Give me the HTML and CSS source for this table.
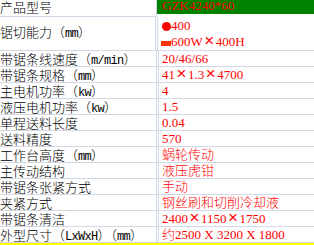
FILE: index.html
```html
<!DOCTYPE html>
<html lang="zh-CN">
<head>
<meta charset="utf-8">
<title>产品参数</title>
<link rel="stylesheet" href="styles.css">
</head>
<body>
<div class="sheet">
  <div class="row head">
    <div class="lbl">产品型号</div>
    <div class="val model">GZK4240*60</div>
  </div>
  <div class="row tall">
    <div class="lbl">锯切能力（<span class="asc">mm</span>）</div>
    <div class="val">
      <div class="ln"><span class="dot"></span>400</div>
      <div class="ln"><span class="bar"></span>600W<span class="x">×</span>400H</div>
    </div>
  </div>
  <div class="row">
    <div class="lbl">带锯条线速度（<span class="asc">m/min</span>）</div>
    <div class="val">20/46/66</div>
  </div>
  <div class="row">
    <div class="lbl">带锯条规格（<span class="asc">mm</span>）</div>
    <div class="val">41<span class="x">×</span>1.3<span class="x">×</span>4700</div>
  </div>
  <div class="row">
    <div class="lbl">主电机功率（<span class="asc">kw</span>）</div>
    <div class="val">4</div>
  </div>
  <div class="row">
    <div class="lbl">液压电机功率（<span class="asc">kw</span>）</div>
    <div class="val">1.5</div>
  </div>
  <div class="row">
    <div class="lbl">单程送料长度</div>
    <div class="val">0.04</div>
  </div>
  <div class="row">
    <div class="lbl">送料精度</div>
    <div class="val">570</div>
  </div>
  <div class="row">
    <div class="lbl">工作台高度（<span class="asc">mm</span>）</div>
    <div class="val">蜗轮传动</div>
  </div>
  <div class="row">
    <div class="lbl">主传动结构</div>
    <div class="val">液压虎钳</div>
  </div>
  <div class="row">
    <div class="lbl">带锯条张紧方式</div>
    <div class="val">手动</div>
  </div>
  <div class="row">
    <div class="lbl">夹紧方式</div>
    <div class="val">钢丝刷和切削冷却液</div>
  </div>
  <div class="row">
    <div class="lbl">带锯条清洁</div>
    <div class="val">2400<span class="x">×</span>1150<span class="x">×</span>1750</div>
  </div>
  <div class="row">
    <div class="lbl">外型尺寸（<span class="asc">LxWxH</span>）（<span class="asc">mm</span>）</div>
    <div class="val">约2500 X 3200 X 1800</div>
  </div>
  <div class="next"></div>
</div>
</body>
</html>
```
FILE: styles.css
```css
html, body {
  margin: 0;
  padding: 0;
  background: #ffffff;
}

.sheet {
  width: 314px;
  font-size: 13px;
  overflow: hidden;
}

.row {
  display: flex;
  height: 15px;
  border-bottom: 1px solid #d0d7e5;
}

.lbl {
  width: 156px;
  flex: none;
  border-right: 1px solid #d0d7e5;
  font-family: "Noto Sans CJK SC", sans-serif;
  font-weight: 300;
  color: #000000;
  line-height: 15px;
  white-space: nowrap;
  overflow: hidden;
}

.val {
  flex: 1;
  margin-left: 1px;
  border-left: 1px solid #d0d7e5;
  padding-left: 3px;
  padding-top: 1px;
  color: #ff0000;
  font-family: "Liberation Serif", "Noto Sans CJK SC", serif;
  font-weight: 300;
  line-height: 14px;
  white-space: nowrap;
}

.asc {
  font-family: "Liberation Mono", monospace;
  font-size: 12px;
  font-weight: 400;
  letter-spacing: -0.7px;
}

.x {
  display: inline-block;
  width: 13px;
  text-align: center;
  font-family: "Liberation Sans", sans-serif;
  font-size: 17px;
  line-height: 10px;
}

/* header row */
.head {
  height: 17px;
  border-bottom: none;
}

.head .lbl {
  border-bottom: 1px solid #d0d7e5;
  line-height: 13px;
}

.model {
  align-self: flex-start;
  height: 14px;
  margin-left: 0;
  border-left: none;
  padding: 0 0 0 5px;
  background: #008000;
  line-height: 11px;
}

/* two-line row */
.tall {
  height: 33px;
}

.tall .lbl {
  padding-top: 7px;
  box-sizing: border-box;
}

.tall .val {
  padding-top: 1px;
  line-height: 16px;
}

.ln {
  height: 16px;
}

.dot {
  display: inline-block;
  width: 9px;
  height: 9px;
  margin-left: 1px;
  border-radius: 50%;
  background: #ff0000;
  vertical-align: -1px;
}

.bar {
  display: inline-block;
  width: 10px;
  height: 5px;
  background: #ff3300;
}

.next {
  height: 2px;
  background: #ffff00;
}
```
